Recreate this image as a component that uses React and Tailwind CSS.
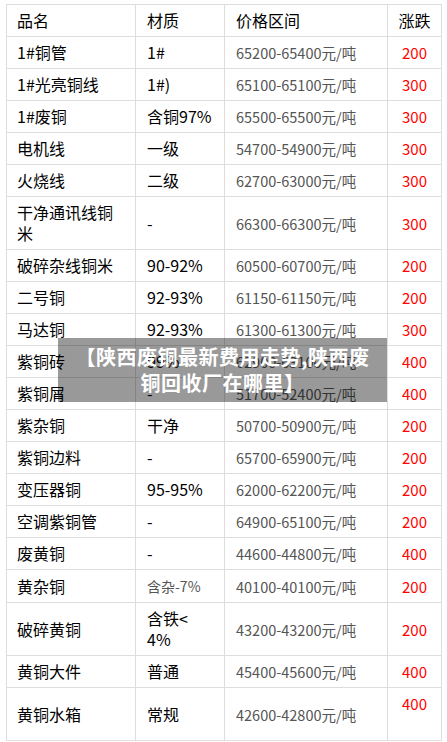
import React from 'react';

const rows = [
  { name: '1#铜管', grade: '1#', price: '65200-65400元/吨', change: '200' },
  { name: '1#光亮铜线', grade: '1#)', price: '65100-65100元/吨', change: '300' },
  { name: '1#废铜', grade: '含铜97%', price: '65500-65500元/吨', change: '300' },
  { name: '电机线', grade: '一级', price: '54700-54900元/吨', change: '300' },
  { name: '火烧线', grade: '二级', price: '62700-63000元/吨', change: '300' },
  { name: '干净通讯线铜米', grade: '-', price: '66300-66300元/吨', change: '300' },
  { name: '破碎杂线铜米', grade: '90-92%', price: '60500-60700元/吨', change: '200' },
  { name: '二号铜', grade: '92-93%', price: '61150-61150元/吨', change: '200' },
  { name: '马达铜', grade: '92-93%', price: '61300-61300元/吨', change: '300' },
  { name: '紫铜砖', grade: '99%', price: '62900-63100元/吨', change: '400' },
  { name: '紫铜屑', grade: '-', price: '51700-52400元/吨', change: '400' },
  { name: '紫杂铜', grade: '干净', price: '50700-50900元/吨', change: '200' },
  { name: '紫铜边料', grade: '-', price: '65700-65900元/吨', change: '200' },
  { name: '变压器铜', grade: '95-95%', price: '62000-62200元/吨', change: '200' },
  { name: '空调紫铜管', grade: '-', price: '64900-65100元/吨', change: '200' },
  { name: '废黄铜', grade: '-', price: '44600-44800元/吨', change: '400' },
  { name: '黄杂铜', grade: '含杂-7%', small: true, price: '40100-40100元/吨', change: '200' },
  { name: '破碎黄铜', grade: ['含铁<', '4%'], price: '43200-43200元/吨', change: '200' },
  { name: '黄铜大件', grade: '普通', price: '45400-45600元/吨', change: '400' },
  { name: '黄铜水箱', grade: '常规', price: '42600-42800元/吨', change: '400', topChange: true },
];

const cell = 'border border-[#dddddd] py-[5px] leading-[21px] align-middle';

const App = () => {
  return (
    <div
      className="relative bg-white w-[447px] min-h-[742px] pt-[4px] pl-[6px]"
      style={{ fontFamily: '"Noto Sans CJK SC", "Noto Sans", sans-serif' }}
    >
      <table className="table-fixed border-collapse w-[435px] text-[16px] text-black">
        <colgroup>
          <col className="w-[129px]" />
          <col className="w-[89px]" />
          <col className="w-[163px]" />
          <col className="w-[54px]" />
        </colgroup>
        <thead>
          <tr>
            <th className={`${cell} pl-[10px] pr-[8px] text-left font-normal`}>品名</th>
            <th className={`${cell} pl-[11px] pr-[8px] text-left font-normal`}>材质</th>
            <th className={`${cell} pl-[11px] pr-[8px] text-left font-normal`}>价格区间</th>
            <th className={`${cell} text-center font-normal`}>涨跌</th>
          </tr>
        </thead>
        <tbody>
          {rows.map((row) => (
            <tr key={row.name}>
              <td className={`${cell} pl-[10px] pr-[10px]`}>{row.name}</td>
              <td className={`${cell} pl-[11px] pr-[8px]`}>
                {Array.isArray(row.grade) ? (
                  <>
                    {row.grade[0]}
                    <br />
                    {row.grade[1]}
                  </>
                ) : row.small ? (
                  <span className="text-[14px] text-[#555555]">{row.grade}</span>
                ) : (
                  row.grade
                )}
              </td>
              <td className={`${cell} pl-[11px] pr-[2px] text-[14.5px] text-[#555555]`}>{row.price}</td>
              <td className={`${cell} text-center text-[15px] text-[#ff0000]`}>
                {row.change}
                {row.topChange && (
                  <>
                    <br />
                    &nbsp;
                  </>
                )}
              </td>
            </tr>
          ))}
        </tbody>
      </table>

      {/* title overlay */}
      <div className="absolute left-[58px] top-[338px] w-[329px] h-[64px] bg-black/40 flex items-center justify-center">
        <p className="text-white font-bold text-[20px] leading-[26px] tracking-[0.5px] text-center">
          【陕西废铜最新费用走势,陕西废
          <br />
          铜回收厂在哪里】
        </p>
      </div>
    </div>
  );
};

export default App;
